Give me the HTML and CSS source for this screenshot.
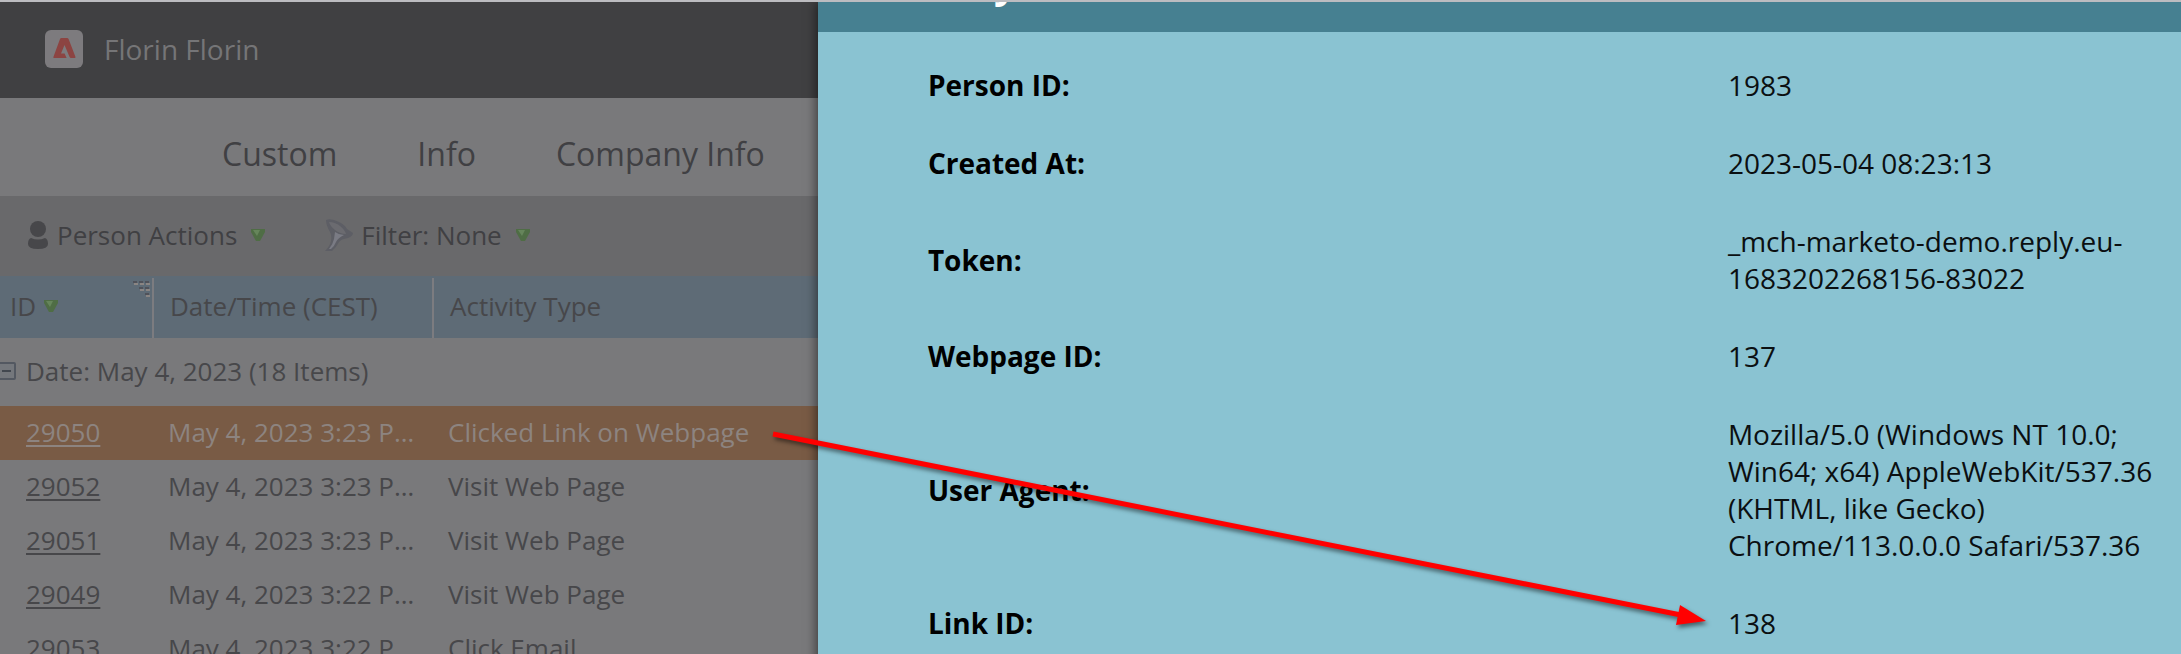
FILE: index.html
```html
<!DOCTYPE html>
<html lang="en">
<head>
    <meta charset="UTF-8">
    <meta name="viewport" content="width=device-width, initial-scale=1.0">
    <title>Activity Log</title>
    <link rel="stylesheet" href="styles.css">
</head>
<body>
    <div class="page">
        <main class="log">
            <header class="topbar">
                <svg class="logo" viewBox="0 0 38 38" aria-hidden="true">
                    <rect width="38" height="38" rx="6" fill="#7d7b7e"/>
                    <path d="M15 9Q15.400 8 16.500 8H22Q23.200 8 23.700 9.200L30.500 27Q30.700 28 29.700 28H26Q25 28 24.600 27L19.500 15 16 23.500H19.600L21.600 28H9Q8 28 8.400 27z" fill="#8c4442"/>
                </svg>
                <span class="user">Florin Florin</span>
            </header>
            <nav class="tabs">
                <a href="#custom">Custom</a>
                <a href="#info">Info</a>
                <a href="#company">Company Info</a>
            </nav>
            <div class="toolbar">
                <button class="tool" type="button">
                    <svg class="person" viewBox="0 0 22 30" aria-hidden="true">
                        <circle cx="11" cy="9" r="8" fill="#47474a"/>
                        <path d="M4 18q7 3 14 0 3 1 3 6 0 5-10 5T1 24q0-5 3-6z" fill="#47474a"/>
                    </svg>
                    Person Actions
                    <svg class="arrow" viewBox="0 0 14 13" aria-hidden="true">
                        <path d="M0 0h14v3L9 12H5L0 3z" fill="#4f6d45"/>
                        <path d="M2 1h7L6 7z" fill="#66855b"/>
                    </svg>
                </button>
                <button class="tool" type="button">
                    <svg class="funnel" viewBox="0 0 28 32" aria-hidden="true">
                        <path d="M1 1Q6-1 14 3q6 3 8 7l6 4q0 3-5 5-7 1-9 4-3 6-7 9H0q5-5 6-10 1-5-1-9Q1 6 1 1z" fill="#5d5e65"/>
                        <path d="M4 3q6 0 11 4 5 4 6 8-6 0-11-4Q5 7 4 3z" fill="#6b6b70"/>
                        <path d="M10 13q4 3 9 3-6 3-8 7-2 5-5 7H4q4-5 5-10z" fill="#7a7b84"/>
                    </svg>
                    Filter: None
                    <svg class="arrow" viewBox="0 0 14 13" aria-hidden="true">
                        <path d="M0 0h14v3L9 12H5L0 3z" fill="#4f6d45"/>
                        <path d="M2 1h7L6 7z" fill="#66855b"/>
                    </svg>
                </button>
            </div>
            <table class="grid">
                <colgroup>
                    <col class="col-id">
                    <col class="col-date">
                    <col>
                </colgroup>
                <thead>
                    <tr>
                        <th>
                            <div class="sort">
                                ID
                                <svg class="arrow" viewBox="0 0 14 13" aria-hidden="true">
                                    <path d="M0 0h14v3L9 12H5L0 3z" fill="#4f6d45"/>
                                    <path d="M2 1h7L6 7z" fill="#66855b"/>
                                </svg>
                                <svg class="grip" viewBox="0 0 18 18" aria-hidden="true">
                                    <g fill="#50525a">
                                        <path d="M0 1h4v2H0zM6 1h4v2H6zM12 1h4v2h-4zM6 7h4v2H6zM12 7h4v2h-4zM12 13h4v2h-4z"/>
                                    </g>
                                    <g fill="#8a8583">
                                        <path d="M1 3h4v2H1zM7 3h4v2H7zM13 3h4v2h-4zM7 9h4v2H7zM13 9h4v2h-4zM13 15h4v2h-4z"/>
                                    </g>
                                </svg>
                            </div>
                        </th>
                        <th>Date/Time (CEST)</th>
                        <th>Activity Type</th>
                    </tr>
                </thead>
                <tbody>
                    <tr class="group">
                        <td colspan="3">
                            <button class="group-toggle" type="button">
                                <svg class="minus" viewBox="0 0 16 18" aria-hidden="true">
                                    <rect x="-3" y="1" width="18" height="16" rx="1" fill="#74777c" stroke="#535861" stroke-width="2"/>
                                    <path d="M2 9h9" stroke="#42474f" stroke-width="2"/>
                                </svg>
                                Date: May 4, 2023 (18 Items)
                            </button>
                        </td>
                    </tr>
                    <tr class="selected">
                        <td><a href="#29050">29050</a></td>
                        <td>May 4, 2023 3:23 PM</td>
                        <td>Clicked Link on Webpage</td>
                    </tr>
                    <tr>
                        <td><a href="#29052">29052</a></td>
                        <td>May 4, 2023 3:23 PM</td>
                        <td>Visit Web Page</td>
                    </tr>
                    <tr>
                        <td><a href="#29051">29051</a></td>
                        <td>May 4, 2023 3:23 PM</td>
                        <td>Visit Web Page</td>
                    </tr>
                    <tr>
                        <td><a href="#29049">29049</a></td>
                        <td>May 4, 2023 3:22 PM</td>
                        <td>Visit Web Page</td>
                    </tr>
                    <tr>
                        <td><a href="#29053">29053</a></td>
                        <td>May 4, 2023 3:22 PM</td>
                        <td>Click Email</td>
                    </tr>
                </tbody>
            </table>
        </main>

        <aside class="panel">
            <h2 class="panel-title">Activity</h2>
            <table class="details">
                <tr>
                    <th scope="row">Person ID:</th>
                    <td>1983</td>
                </tr>
                <tr>
                    <th scope="row">Created At:</th>
                    <td>2023-05-04 08:23:13</td>
                </tr>
                <tr>
                    <th scope="row">Token:</th>
                    <td>_mch-marketo-demo.reply.eu-1683202268156-83022</td>
                </tr>
                <tr>
                    <th scope="row">Webpage ID:</th>
                    <td>137</td>
                </tr>
                <tr>
                    <th scope="row">User Agent:</th>
                    <td>Mozilla/5.0 (Windows NT 10.0; Win64; x64) AppleWebKit/537.36 (KHTML, like Gecko) Chrome/113.0.0.0 Safari/537.36</td>
                </tr>
                <tr>
                    <th scope="row">Link ID:</th>
                    <td>138</td>
                </tr>
            </table>
        </aside>

        <!-- red pointer from the selected row to the link id -->
        <svg class="pointer" viewBox="0 0 2181 654" aria-hidden="true">
            <path d="M773 434L1681 615" stroke="#f00" stroke-width="5"/>
            <path d="M1680 605L1706 621L1676 625z" fill="#f00"/>
        </svg>
    </div>
</body>
</html>
```
FILE: styles.css
```css
* {
    box-sizing: border-box;
}
body {
    margin: 0;
    font-family: "Open Sans", sans-serif;
    font-size: 26px;
    color: #47474a;
    background: #79797b;
}
.page {
    position: relative;
    display: grid;
    grid-template-columns: 3fr 5fr;
    height: 100vh;
    overflow: hidden;
    border-top: 2px solid #bcbcc0;
}
button {
    padding: 0;
    border: none;
    background: none;
    font: inherit;
    color: inherit;
    cursor: pointer;
}

/* activity log */
.log {
    min-width: 0;
    background: #79797b;
}
.topbar {
    display: flex;
    align-items: center;
    gap: 21px;
    height: 96px;
    padding: 0 0 2px 45px;
    background: #404042;
}
.logo {
    width: 38px;
    height: 38px;
}
.user {
    font-size: 28px;
    color: #757577;
}
.tabs {
    display: flex;
    align-items: center;
    gap: 80px;
    height: 98px;
    padding: 12px 0 0 222px;
    font-size: 32px;
}
.tabs a {
    color: #404043;
    text-decoration: none;
    white-space: nowrap;
}
.toolbar {
    display: flex;
    align-items: center;
    gap: 60px;
    height: 80px;
    padding: 0 0 2px 27px;
    color: #404043;
    background: #69696b;
}
.tool {
    display: flex;
    align-items: center;
    gap: 8px;
    white-space: nowrap;
}
.person {
    width: 22px;
    height: 30px;
}
.funnel {
    width: 28px;
    height: 32px;
}
.arrow {
    width: 14px;
    height: 13px;
}
.tool .arrow {
    margin-left: 6px;
}

.grid {
    width: 100%;
    table-layout: fixed;
    border-collapse: collapse;
}
.col-id {
    width: 154px;
}
.col-date {
    width: 280px;
}
.grid th {
    height: 62px;
    padding: 0 0 2px 16px;
    font-weight: normal;
    text-align: left;
    background: linear-gradient(#7c7c80, #7c7c80) right bottom / 2px 60px no-repeat #5e6b76;
}
.grid th:first-child {
    padding-left: 10px;
}
.grid th:last-child {
    background: #5e6b76;
}
.sort {
    display: flex;
    align-items: center;
    gap: 8px;
}
.grip {
    width: 18px;
    height: 18px;
    margin: 0 3px 34px auto;
}
.grid td {
    height: 54px;
    padding: 0 18px 2px 14px;
    overflow: hidden;
    text-overflow: ellipsis;
    white-space: nowrap;
}
.grid td:first-child {
    padding-left: 26px;
}
.grid td a {
    color: inherit;
    text-underline-offset: 3px;
}
.grid .group td {
    height: 68px;
    padding: 0 0 2px;
}
.group-toggle {
    display: flex;
    align-items: center;
    gap: 10px;
}
.minus {
    width: 16px;
    height: 18px;
}
.selected {
    color: #8d8480;
    background: #795b45;
}

/* details panel */
.panel {
    background: #8ac3d2;
    box-shadow: -2px 0 10px rgba(0, 0, 0, 0.5);
}
.panel-title {
    display: flex;
    align-items: flex-end;
    height: 30px;
    margin: 0;
    padding: 0 46px 22px;
    overflow: hidden;
    font-size: 40px;
    color: #fff;
    background: #468091;
}
.details {
    width: 100%;
    margin-top: 15px;
    table-layout: fixed;
    border-collapse: collapse;
    font-size: 28px;
    line-height: 37px;
    color: #0b0f11;
}
.details th {
    width: 910px;
    padding: 20px 0 21px 110px;
    font-weight: 700;
    text-align: left;
    color: #000;
}
.details td {
    padding: 20px 24px 21px 0;
}

.pointer {
    position: absolute;
    top: -2px;
    left: 0;
    width: 100%;
    filter: drop-shadow(2px 3px 2px rgba(0, 0, 0, 0.5));
}
```
